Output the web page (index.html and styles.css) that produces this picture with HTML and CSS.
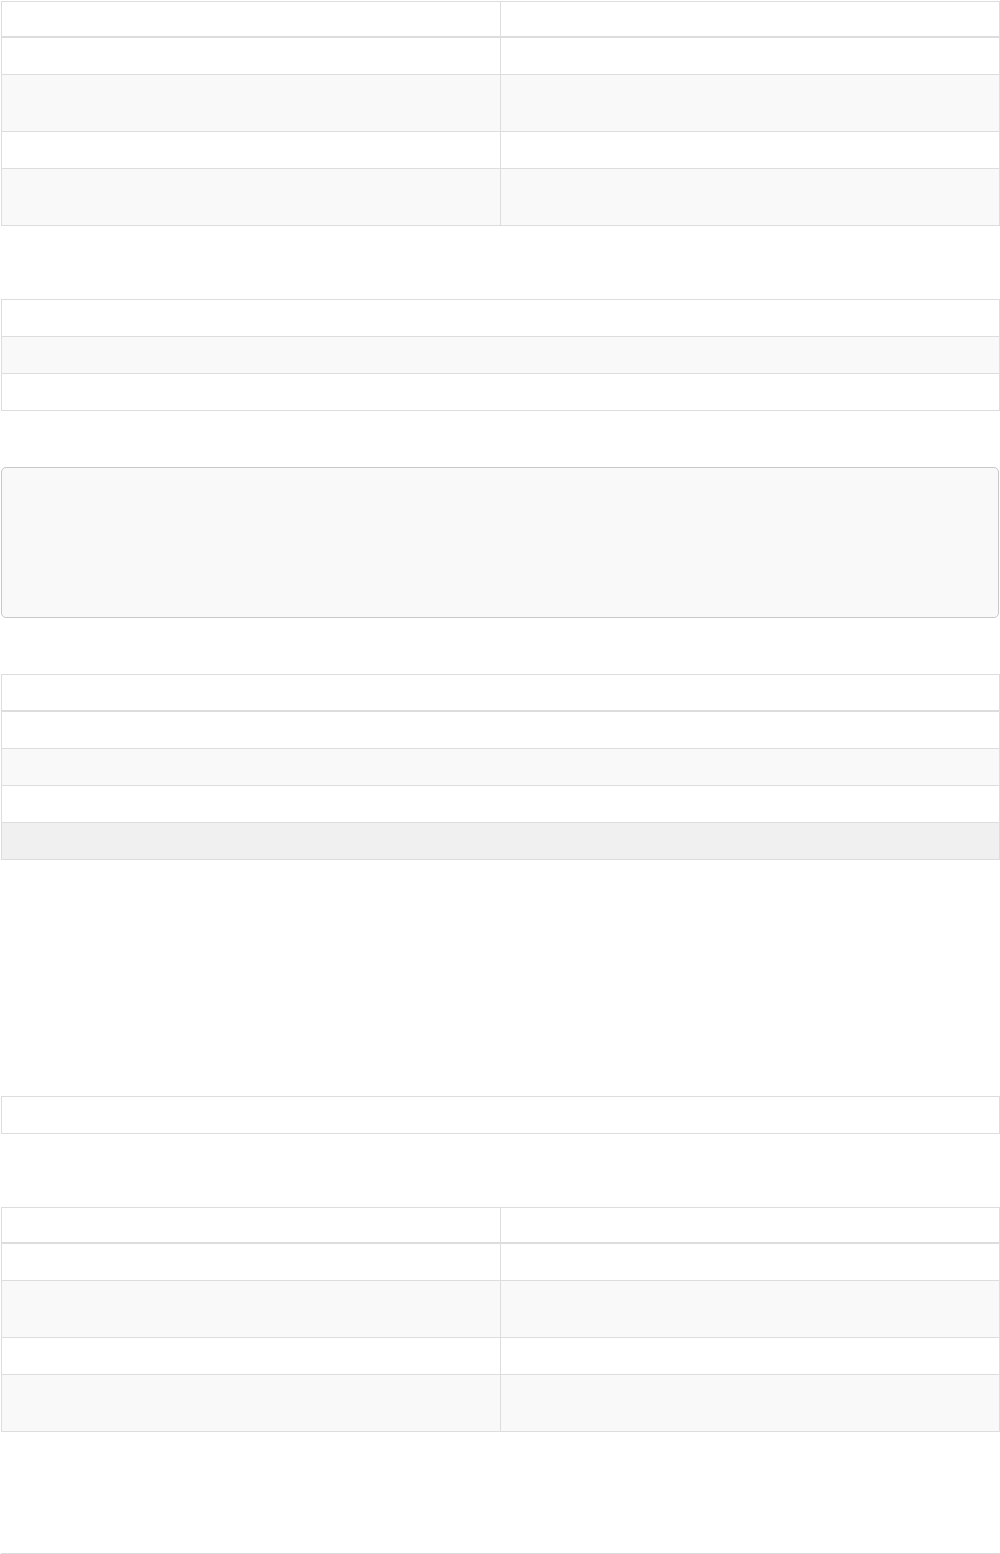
FILE: index.html
```html
<!DOCTYPE html>
<html lang="en">
<head>
<meta charset="utf-8">
<title>Tables</title>
<link rel="stylesheet" href="styles.css">
</head>
<body>
<main class="page">
  <table class="grid two-col">
    <thead>
      <tr><th></th><th></th></tr>
    </thead>
    <tbody>
      <tr><td></td><td></td></tr>
      <tr class="tall"><td></td><td></td></tr>
      <tr><td></td><td></td></tr>
      <tr class="tall"><td></td><td></td></tr>
    </tbody>
  </table>

  <table class="grid gap-73">
    <tbody>
      <tr><td></td></tr>
      <tr><td></td></tr>
      <tr><td></td></tr>
    </tbody>
  </table>

  <pre class="code gap-56"></pre>

  <table class="grid gap-56 head-37">
    <thead>
      <tr><th></th></tr>
    </thead>
    <tbody>
      <tr><td></td></tr>
      <tr><td></td></tr>
      <tr><td></td></tr>
      <tr class="active"><td></td></tr>
    </tbody>
  </table>

  <table class="grid gap-236">
    <tbody>
      <tr><td></td></tr>
    </tbody>
  </table>

  <table class="grid two-col gap-73">
    <thead>
      <tr><th></th><th></th></tr>
    </thead>
    <tbody>
      <tr><td></td><td></td></tr>
      <tr class="tall"><td></td><td></td></tr>
      <tr><td></td><td></td></tr>
      <tr class="tall"><td></td><td></td></tr>
    </tbody>
  </table>

  <table class="grid gap-121">
    <tbody>
      <tr><td></td></tr>
      <tr><td></td></tr>
    </tbody>
  </table>
</main>
</body>
</html>
```

FILE: styles.css
```css
html, body {
  margin: 0;
  padding: 0;
  background: #ffffff;
  font-family: "Liberation Sans", Arial, sans-serif;
  font-size: 14px;
  color: #333333;
}

.page {
  padding: 1px 0 0 1px;
}

.grid {
  width: 999px;
  border-collapse: separate;
  border-spacing: 0;
  border-top: 1px solid #dddddd;
  border-left: 1px solid #dddddd;
  table-layout: fixed;
}

.grid th,
.grid td {
  box-sizing: border-box;
  padding: 0;
  height: 37px;
  border-right: 1px solid #dddddd;
  border-bottom: 1px solid #dddddd;
  background: #ffffff;
}

.grid thead th {
  height: 36px;
  border-bottom-width: 2px;
}

.grid.head-37 thead th {
  height: 37px;
}

.grid tbody tr:nth-child(even) td {
  background: #f9f9f9;
}

.grid tbody tr.tall td {
  height: 57px;
}

.grid tbody tr.active td {
  background: #f0f0f0;
}

.two-col th,
.two-col td {
  width: 50%;
}

.code {
  box-sizing: border-box;
  width: 998px;
  height: 151px;
  margin-bottom: 0;
  margin-left: 0;
  margin-right: 0;
  padding: 9px;
  background: #f9f9f9;
  border: 1px solid #c8c8c8;
  border-radius: 5px;
}

.gap-73 { margin-top: 73px; }
.gap-56 { margin-top: 56px; }
.gap-236 { margin-top: 236px; }
.gap-121 { margin-top: 121px; }
```
